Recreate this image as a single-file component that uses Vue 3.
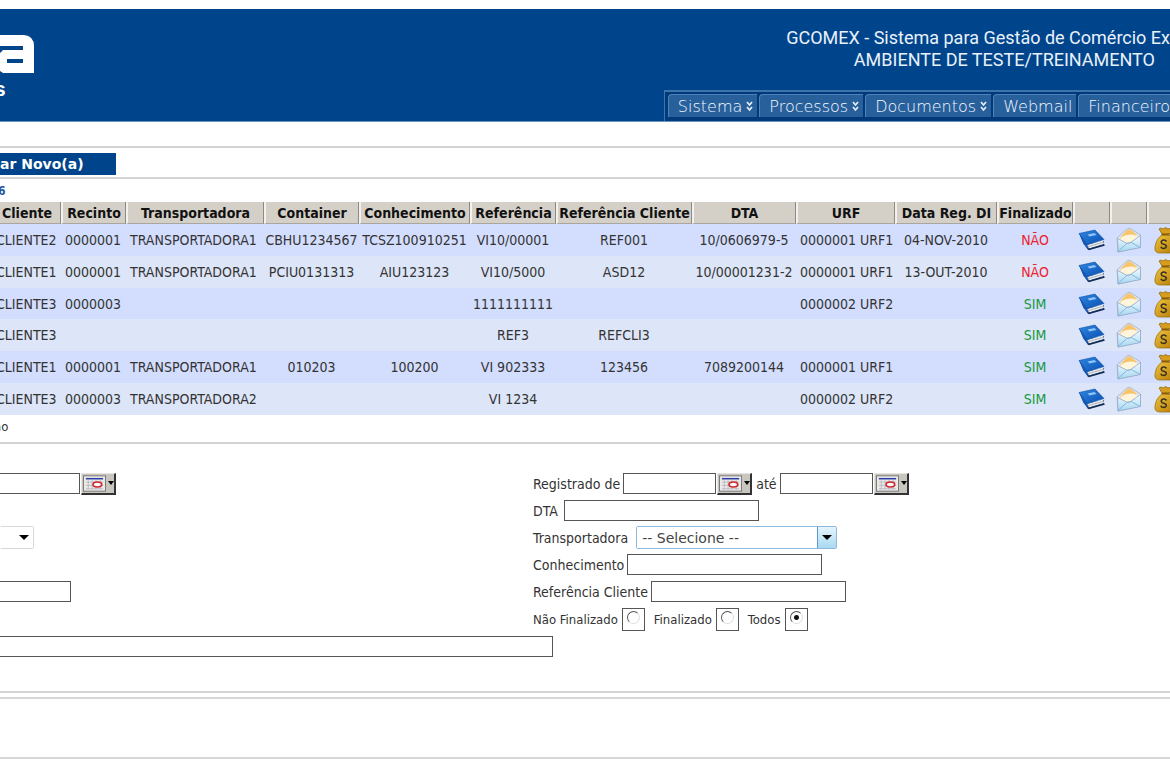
<script setup>
import { ref } from 'vue'

const menu = [
  { label: 'Sistema', sub: true },
  { label: 'Processos', sub: true },
  { label: 'Documentos', sub: true },
  { label: 'Webmail', sub: false },
  { label: 'Financeiro', sub: false },
]

const columns = [
  'Cliente', 'Recinto', 'Transportadora', 'Container', 'Conhecimento', 'Referência',
  'Referência Cliente', 'DTA', 'URF', 'Data Reg. DI', 'Finalizado', '', '', '',
]

const rows = [
  ['CLIENTE2', '0000001', 'TRANSPORTADORA1', 'CBHU1234567', 'TCSZ100910251', 'VI10/00001', 'REF001', '10/0606979-5', '0000001 URF1', '04-NOV-2010', 'NÃO'],
  ['CLIENTE1', '0000001', 'TRANSPORTADORA1', 'PCIU0131313', 'AIU123123', 'VI10/5000', 'ASD12', '10/00001231-2', '0000001 URF1', '13-OUT-2010', 'NÃO'],
  ['CLIENTE3', '0000003', '', '', '', '1111111111', '', '', '0000002 URF2', '', 'SIM'],
  ['CLIENTE3', '', '', '', '', 'REF3', 'REFCLI3', '', '', '', 'SIM'],
  ['CLIENTE1', '0000001', 'TRANSPORTADORA1', '010203', '100200', 'VI 902333', '123456', '7089200144', '0000001 URF1', '', 'SIM'],
  ['CLIENTE3', '0000003', 'TRANSPORTADORA2', '', '', 'VI 1234', '', '', '0000002 URF2', '', 'SIM'],
]

const leftAligned = [0, 1, 2, 8]
const status = ref('todos')
</script>

<template>
  <div class="page">
    <svg class="defs" width="0" height="0" aria-hidden="true">
      <defs>
        <linearGradient id="gBook" x1="0" y1="0" x2="1" y2="1">
          <stop offset="0" stop-color="#2f86e0" /><stop offset="1" stop-color="#0a50b4" />
        </linearGradient>
        <linearGradient id="gMail" x1="0" y1="0" x2="0" y2="1">
          <stop offset="0" stop-color="#f4fbff" /><stop offset="1" stop-color="#a5d6f4" />
        </linearGradient>
        <linearGradient id="gBag" x1="0" y1="0" x2="1" y2="1">
          <stop offset="0" stop-color="#f0c63c" /><stop offset="1" stop-color="#b27808" />
        </linearGradient>
        <symbol id="book" viewBox="0 0 28 24">
          <path d="M1 5 L6 16 L10 22 L26 17 L26 13 L9 16 Z" fill="#173e7c" />
          <path d="M9 17 L25 12.500 L26 16 L11 20.500 Z" fill="#e9edf0" />
          <path d="M9.500 18.800 L25.500 14.300" stroke="#8f9ba8" stroke-width=".7" />
          <path d="M1 5.500 L17 2 L26 11.500 L9 16.500 Z" fill="url(#gBook)" stroke="#0f4f9f" stroke-width=".6" />
          <path d="M9.500 6.500 L16.500 5 L18.500 7 L11.500 8.600 Z" fill="#8dc4f5" />
          <path d="M1 5.500 L9 16.500 L10.500 21.500 L5.500 16 Z" fill="#1358b5" />
          <path d="M10.500 21.500 L26.500 17" stroke="#152d50" stroke-width="1.500" />
        </symbol>
        <symbol id="mail" viewBox="0 0 26 26">
          <path d="M1 11 L11 2 Q13 .5 15 2 L24.500 8 L24.500 20 L2 25 Z" fill="#dfe6ee" stroke="#a3b1c2" stroke-width=".8" />
          <path d="M4 11 L11 3 Q13 1.500 15 3 L21 8 L13 15 Z" fill="#f8c46a" />
          <path d="M5 10.500 Q13 5.500 21 9 L21 13 L13 18 L5 14 Z" fill="#fff4dc" />
          <path d="M1.500 11.500 L12.500 17 L24.500 8.500 L24.500 20.500 L2 25 Z" fill="url(#gMail)" stroke="#93a9c4" stroke-width=".8" />
          <path d="M2 24.500 L11 16.300 L15 15.300 L24 20.500" fill="none" stroke="#86b6d8" stroke-width="1" />
        </symbol>
        <symbol id="bag" viewBox="0 0 24 28">
          <path d="M5 3 Q7 1 9 3 Q12 0 14 3 Q17 1 19 4 L15 8 L8 8 Z" fill="#d79d1d" stroke="#8d6208" stroke-width=".7" />
          <path d="M8 9 L15 9 Q22 13 23 21 Q23 27 17 27 L6 27 Q0 27 1 21 Q2 13 8 9 Z" fill="url(#gBag)" stroke="#98690a" stroke-width=".7" />
          <path d="M7.500 8.500 H15.500" stroke="#8a5c08" stroke-width="1.600" />
          <path d="M12.500 15.500 Q11.500 13.800 9.500 14 Q7 14.500 7.300 16.500 Q7.500 18 9.800 18.300 Q12.500 18.800 12.300 20.700 Q12 22.500 9.800 22.500 Q7.500 22.500 6.800 20.700" fill="none" stroke="#3d3420" stroke-width="1.600" />
        </symbol>
        <symbol id="calendar" viewBox="0 0 24 17">
          <rect x=".5" y=".5" width="23" height="16" fill="#eceae6" stroke="#777" />
          <path d="M3 3.500 H21" stroke="#2b3fa8" stroke-width="1.600" />
          <path d="M3 7 H21 M3 10.500 H21 M3 14 H21 M5.500 5 V15 M9.500 5 V15 M13.500 5 V15 M18 5 V15" stroke="#b0b0c0" stroke-width=".8" />
          <ellipse cx="15" cy="9.500" rx="4.500" ry="2.600" fill="#fff" stroke="#cc2a2f" stroke-width="1.700" />
        </symbol>
      </defs>
    </svg>

    <header class="banner">
      <div class="brand">
        <svg class="logo" width="34" height="39" viewBox="0 0 34 39" aria-hidden="true">
          <path d="M0 0 H24 Q34 1 34 11 V38 H3 L0 36 V18 L3 15 H23 V11 H0 Z" fill="#fff" />
          <path d="M7 24 H23 V28 H7 Z" fill="#00458c" />
        </svg>
        <span class="brand-sub">s</span>
      </div>
      <div class="banner-side">
        <div class="titles">
          <div>GCOMEX - Sistema para Gestão de Comércio Ex</div>
          <div class="env">AMBIENTE DE TESTE/TREINAMENTO</div>
        </div>
        <nav class="menu">
          <a v-for="m in menu" :key="m.label" href="#" class="menu-item">
            {{ m.label }}
            <svg v-if="m.sub" width="7" height="11" viewBox="0 0 7 11" aria-hidden="true">
              <path d="M1 1 L3.500 4 L6 1 M1 6 L3.500 9 L6 6" fill="none" stroke="#e4eefa" stroke-width="1.700" />
            </svg>
          </a>
        </nav>
      </div>
    </header>

    <div class="actions"><button type="button" class="new">ar Novo(a)</button></div>
    <div class="count">6</div>

    <div class="grid">
      <table>
        <colgroup><col v-for="(c, i) in columns" :key="i" :class="'c' + i" /></colgroup>
        <thead>
          <tr><th v-for="(c, i) in columns" :key="i">{{ c }}</th></tr>
        </thead>
        <tbody>
          <tr v-for="(r, n) in rows" :key="n">
            <td v-for="(v, i) in r" :key="i" :class="{ left: leftAligned.includes(i), no: v === 'NÃO', yes: v === 'SIM' }">{{ v }}</td>
            <td><svg class="icon" width="28" height="24"><use href="#book" /></svg></td>
            <td><svg class="icon" width="26" height="26"><use href="#mail" /></svg></td>
            <td><svg class="icon" width="24" height="28"><use href="#bag" /></svg></td>
          </tr>
        </tbody>
      </table>
    </div>
    <div class="legend">ão</div>

    <form class="search" @submit.prevent>
      <div class="col-left">
        <div class="line">
          <input type="text" class="l-date" aria-label="Data" />
          <button type="button" class="cal" aria-label="Calendário"><svg width="24" height="17"><use href="#calendar" /></svg><i class="tri"></i></button>
        </div>
        <div class="line"></div>
        <div class="line"><span class="combo plain"><select aria-label="Opção"><option></option></select><i class="drop"><i class="tri big"></i></i></span></div>
        <div class="line"></div>
        <div class="line"><input type="text" class="l-ref" aria-label="Referência" /></div>
      </div>
      <div class="col-right">
        <div class="line">
          <label for="d1">Registrado de</label>
          <input id="d1" type="text" class="date" />
          <button type="button" class="cal" aria-label="Calendário"><svg width="24" height="17"><use href="#calendar" /></svg><i class="tri"></i></button>
          <label for="d2" class="until">até</label>
          <input id="d2" type="text" class="date" />
          <button type="button" class="cal" aria-label="Calendário"><svg width="24" height="17"><use href="#calendar" /></svg><i class="tri"></i></button>
        </div>
        <div class="line"><label for="dta" class="dta">DTA</label><input id="dta" type="text" class="wide" /></div>
        <div class="line">
          <label for="tr" class="tr">Transportadora</label>
          <span class="combo"><select id="tr"><option>-- Selecione --</option></select><i class="drop"><i class="tri big"></i></i></span>
        </div>
        <div class="line"><label for="con">Conhecimento</label><input id="con" type="text" class="wide" /></div>
        <div class="line"><label for="rc">Referência Cliente</label><input id="rc" type="text" class="wide" /></div>
        <div class="line radios">
          <label for="r1">Não Finalizado</label><span class="box"><input id="r1" v-model="status" type="radio" value="nao" /></span>
          <label for="r2">Finalizado</label><span class="box"><input id="r2" v-model="status" type="radio" value="fin" /></span>
          <label for="r3">Todos</label><span class="box"><input id="r3" v-model="status" type="radio" value="todos" /></span>
        </div>
      </div>
      <div class="line full"><input type="text" class="l-full" aria-label="Descrição" /></div>
    </form>

    <footer class="foot"></footer>
  </div>
</template>

<style>
body { margin: 0; background: #fff; }
</style>

<style scoped>
.page {
  overflow: hidden;
  padding-top: 9px;
  font-family: "DejaVu Sans Condensed", "DejaVu Sans", sans-serif;
  font-size: 14px;
  color: #333;
}
.page * { box-sizing: border-box; }
.defs { position: absolute; }
.banner {
  display: flex;
  justify-content: space-between;
  height: 113px;
  border-bottom: 1px solid #6a94c0;
  background: #00458c;
  color: #e9f1fb;
}
.brand { display: flex; flex-direction: column; padding-top: 26px; width: 34px; }
.logo { display: block; }
.brand-sub {
  margin-left: -6px;
  font: bold 21px/30px "Liberation Sans", sans-serif;
  color: #fff;
}
.banner-side { display: flex; flex-direction: column; justify-content: space-between; }
.titles {
  padding-top: 18px;
  font-family: Roboto, sans-serif;
  font-size: 18px;
  line-height: 22px;
  text-align: right;
  white-space: nowrap;
}
.env { padding-right: 15px; }
.menu {
  display: flex;
  align-self: flex-end;
  gap: 2px;
  height: 31px;
  padding: 2px 0 4px 3px;
  border-top: 2px solid #3e74ac;
  border-left: 1px solid #3e74ac;
  background: #013a7a;
}
.menu-item {
  display: flex;
  align-items: center;
  gap: 4px;
  padding: 0 4px 0 9px;
  border-top: 1px solid #4f82b6;
  border-left: 1px solid #4f82b6;
  border-radius: 4px 0 0 0;
  background: #28609c;
  color: #f2f8ff;
  font-size: 16px;
  font-weight: 200;
  font-family: "DejaVu Sans", sans-serif;
  white-space: nowrap;
  text-decoration: none;
}
.menu-item:last-child { padding-right: 0; }
.actions {
  display: flex;
  align-items: center;
  height: 33px;
  margin-top: 24px;
  padding-top: 2px;
  border-top: 2px solid #d3d3d3;
  border-bottom: 2px solid #d3d3d3;
}
.new {
  width: 116px;
  height: 22px;
  padding: 0;
  border: 0;
  background: #00458c;
  color: #fff;
  font: bold 14px/22px "DejaVu Sans", sans-serif;
  text-align: left;
}
.count { height: 23px; margin-left: -2px; font-size: 12px; font-weight: bold; line-height: 25px; color: #1f559c; }
.grid { overflow: hidden; }
table {
  width: calc(100% + 22px);
  height: 213px;
  margin-left: -8px;
  border-collapse: separate;
  border-spacing: 0;
  table-layout: fixed;
}
.c0 { width: 69px; } .c1 { width: 65px; } .c2 { width: 138px; } .c3 { width: 95px; }
.c4 { width: 111px; } .c5 { width: 86px; } .c6 { width: 136px; } .c7 { width: 104px; }
.c8 { width: 99px; } .c9 { width: 102px; } .c10 { width: 76px; }
.c11, .c12, .c13 { width: 37px; }
th {
  height: 22px;
  padding: 0;
  border-left: 2px solid #f3f1ee;
  border-right: 1px solid #8d8a84;
  border-bottom: 1px solid #a9a69f;
  background: #d4d0c8;
  color: #111;
  white-space: nowrap;
}
td { padding: 0; text-align: center; white-space: nowrap; }
td.left { padding-left: 4px; text-align: left; }
tbody tr:nth-child(odd) { background: #d3deff; }
tbody tr:nth-child(even) { background: #dde5f8; }
td.no { color: #f0202a; }
td.yes { color: #15993a; }
.icon { display: block; margin: 0 auto; }
.legend { height: 29px; font-size: 13px; line-height: 24px; margin-left: -6px; border-bottom: 2px solid #d3d3d3; }
.search {
  display: grid;
  grid-template-columns: 533px 1fr;
  align-content: start;
  padding-top: 26px;
  height: 249px;
  border-bottom: 2px solid #d3d3d3;
}
.line { display: flex; align-items: center; height: 27px; white-space: nowrap; }
.col-left, .col-right { display: flex; flex-direction: column; }
.full { grid-column: 1 / -1; }
input[type="text"] {
  height: 21px;
  padding: 0 2px;
  border: 1px solid #555;
  border-radius: 0;
  background: #fff;
}
label { margin-right: 3px; }
.l-date { width: 80px; }
.l-ref { width: 71px; }
.l-full { width: 553px; }
input.l-date, input.l-ref, input.l-full { border-left: 0; }
.date { width: 93px; }
.wide { width: 195px; }
.until { margin-left: 4px; }
.dta { margin-right: 6px; }
.tr { margin-right: 8px; }
.cal {
  display: flex;
  align-items: center;
  gap: 2px;
  width: 35px;
  height: 22px;
  margin-left: 1px;
  padding: 0 0 0 1px;
  border: 1px solid #e6e4e0;
  border-right: 2px solid #333;
  border-bottom: 2px solid #333;
  background: #c9c6c0;
}
.tri { border: 3px solid transparent; border-top: 4px solid #000; border-bottom: 0; }
.tri.big { border-width: 5px 5px 0; }
.combo { display: flex; width: 201px; height: 23px; border: 1px solid #8fb9dc; border-radius: 2px; }
.combo select {
  flex: 1;
  min-width: 0;
  padding: 0 5px;
  border: 0;
  background: #fff;
  color: #444;
  font: 14px "DejaVu Sans", sans-serif;
  appearance: none;
}
.drop { display: flex; align-items: center; justify-content: center; width: 19px; border-left: 1px solid #5d9bcb; background: linear-gradient(#e4f4fd, #a9d9f2); }
.combo.plain { width: 34px; border: 1px solid #d8d8d8; border-left: 0; }
.plain .drop { border: 0; background: #fff; }
.radios { height: 28px; font-size: 13px; }
.radios label { margin-right: 4px; }
.box { display: flex; align-items: center; justify-content: center; width: 23px; height: 23px; margin-right: 9px; border: 1px solid #555; }
.box input { appearance: none; width: 13px; height: 13px; margin: 0 0 3px; border: 1px solid #ddd; border-top-color: #555; border-left-color: #555; border-radius: 50%; background: #fff; }
.box input:checked { background: radial-gradient(circle, #111 0 2px, #fff 3px); }
.foot { height: 62px; margin-top: 4px; border-top: 2px solid #d6d6d6; border-bottom: 2px solid #d6d6d6; }
</style>
